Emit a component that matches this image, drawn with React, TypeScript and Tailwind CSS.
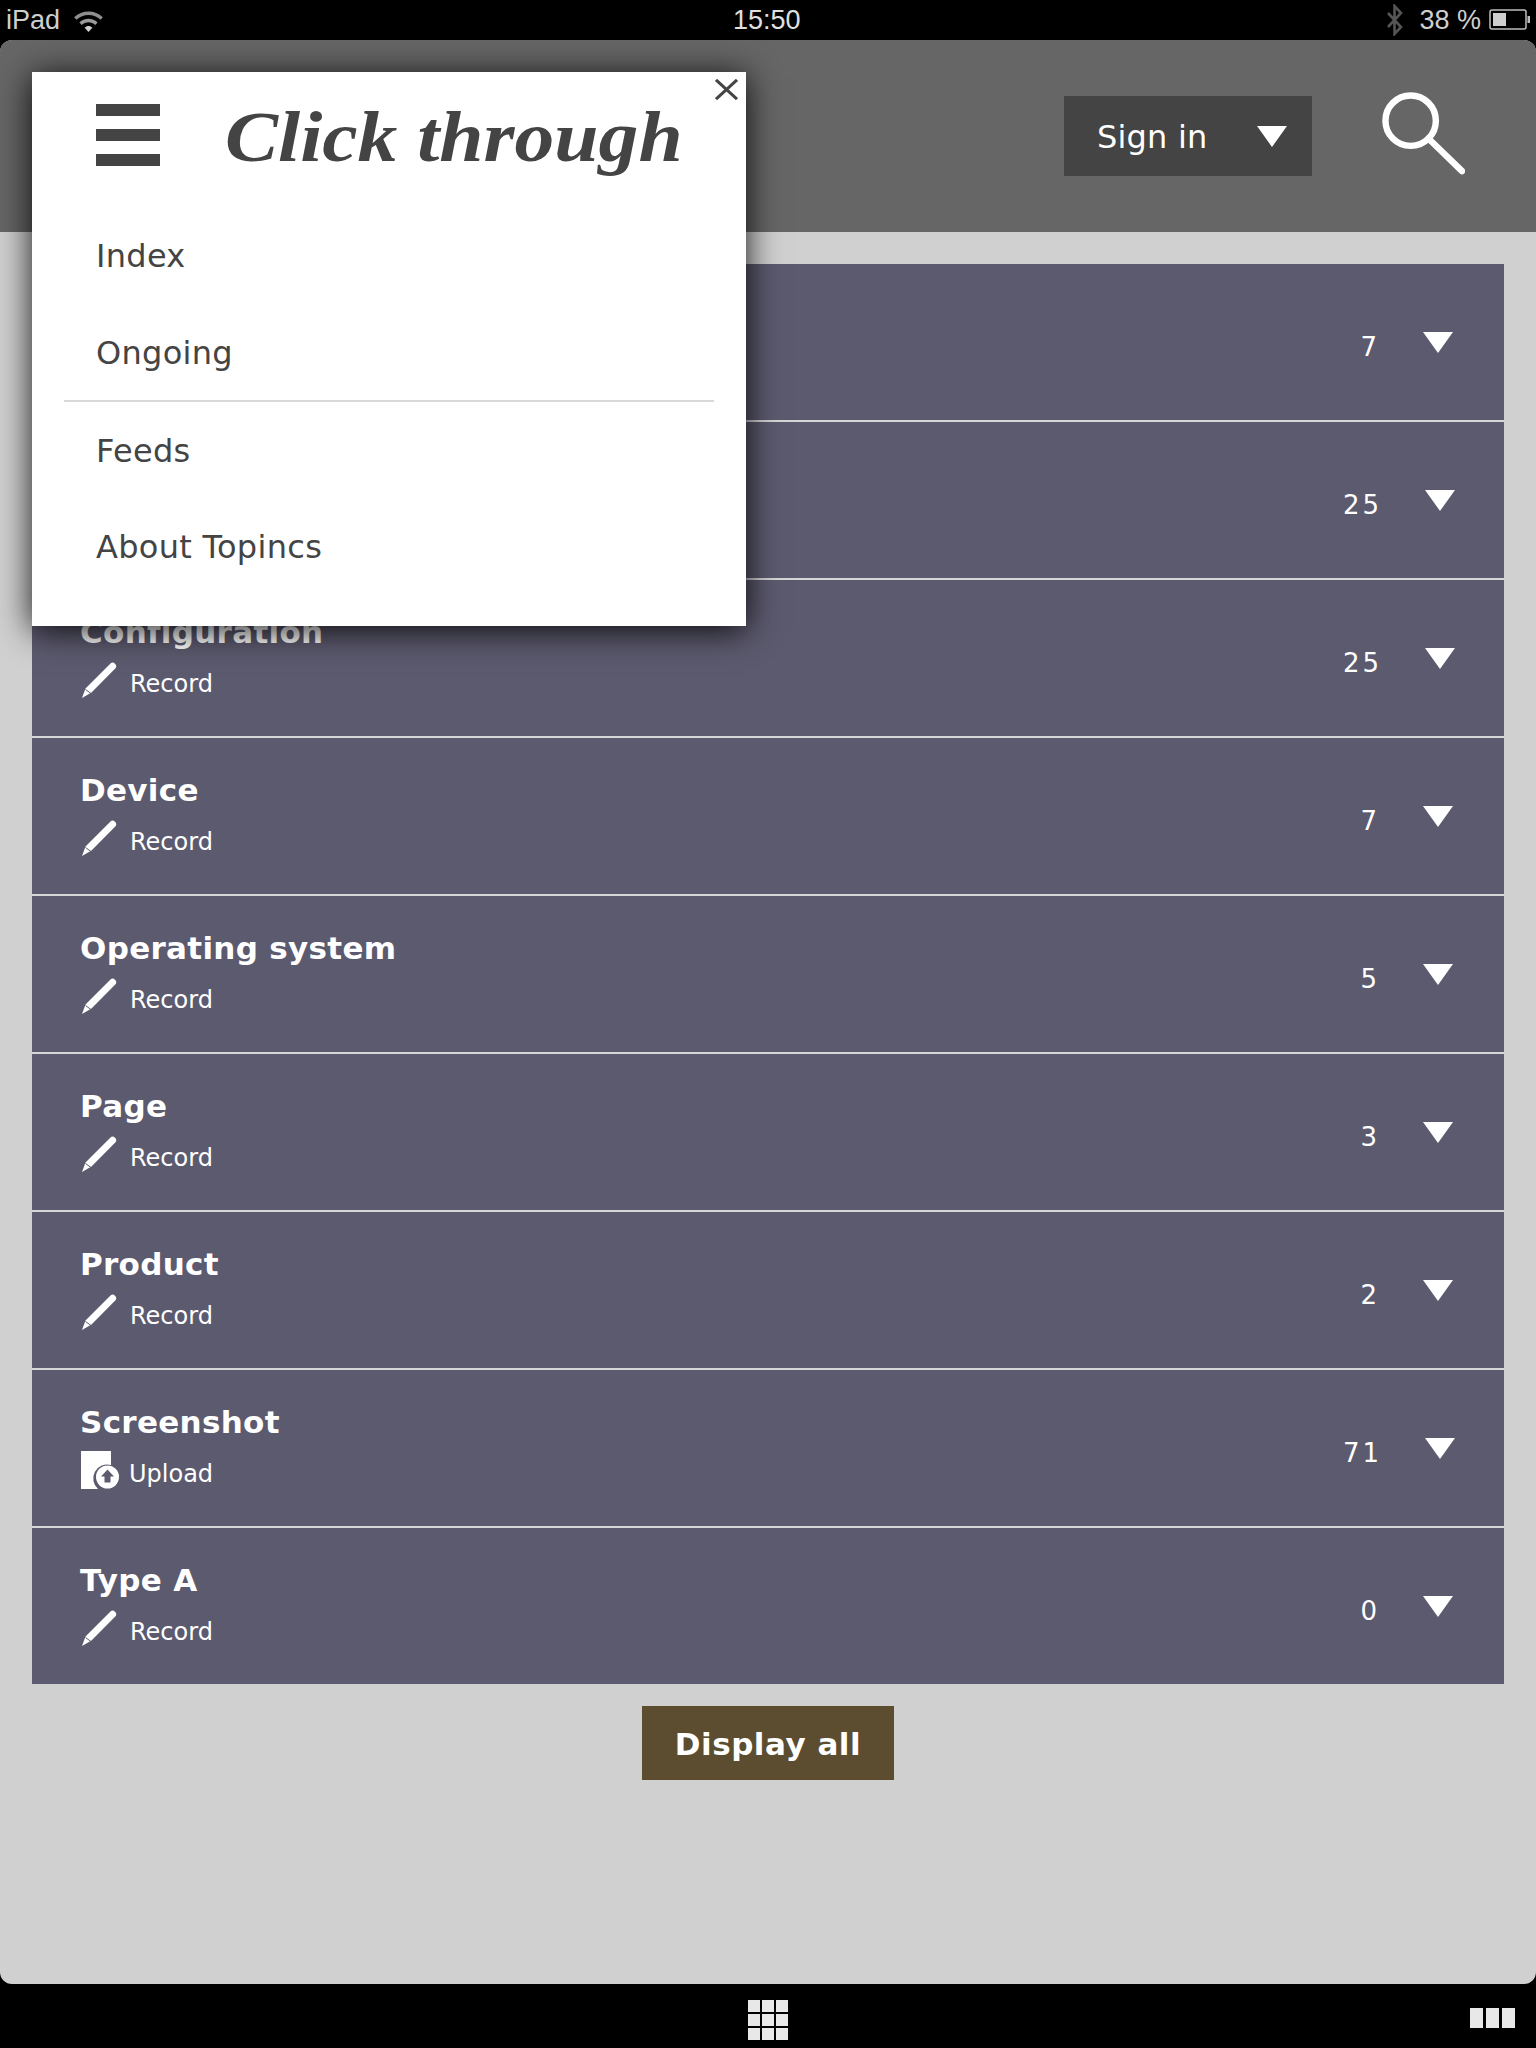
const rows = [
  { title: "", sub: "", count: "7" },
  { title: "", sub: "", count: "25" },
  { title: "Configuration", sub: "Record", count: "25" },
  { title: "Device", sub: "Record", count: "7" },
  { title: "Operating system", sub: "Record", count: "5" },
  { title: "Page", sub: "Record", count: "3" },
  { title: "Product", sub: "Record", count: "2" },
  { title: "Screenshot", sub: "Upload", count: "71" },
  { title: "Type A", sub: "Record", count: "0" },
];

function Caret({ className }: { className: string }) {
  return (
    <svg viewBox="0 0 30 21" className={className}>
      <polygon points="0,0 30,0 15,21" fill="#fff" />
    </svg>
  );
}

function Pencil() {
  return (
    <svg viewBox="0 0 36 36" className="w-[36px] h-[36px] shrink-0 ml-[2px]">
      <path d="M28.500 1.500c1.200-1.200 3-1.200 4.500.2s1.700 3.300.5 4.500L9.500 30.500 0 36l3.500-9.500z" fill="#fff" />
      <path d="M3.500 27.500l5.500 4" stroke="#5c5a6e" strokeWidth="1" fill="none" />
    </svg>
  );
}

function UploadIcon() {
  return (
    <svg viewBox="0 0 39 38" className="w-[39px] h-[38px] shrink-0 ml-[1px]">
      <path d="M0 0h30v14a14 14 0 0 0-13 24H0z" fill="#fff" />
      <circle cx="26.500" cy="26" r="11.500" fill="#fff" />
      <path d="M26.500 18.500l6.500 7h-3.500v6h-6v-6H20z" fill="#5c5a6e" />
    </svg>
  );
}

function Row({ r }: { r: (typeof rows)[number] }) {
  const two = r.count.length > 1;
  return (
    <div className="h-[158px] last:h-[156px] border-b-2 last:border-b-0 border-[#d6d6d6] bg-[#5c5a6e] flex items-start justify-between text-white">
      <div className="pl-[48px] pt-[36px] flex flex-col">
        <div className="h-[32px] leading-[32px] text-[31px] tracking-[0.3px] font-bold whitespace-nowrap">{r.title || "\u00a0"}</div>
        <div className="flex items-center h-[36px] mt-[14px] text-[24px] leading-[36px]">
          {r.sub === "Upload" ? <UploadIcon /> : r.sub ? <Pencil /> : null}
          <span className={r.sub === "Upload" ? "ml-[9px] mt-[7px]" : "ml-[12px] mt-[8px]"}>{r.sub}</span>
        </div>
      </div>
      <div className={`flex items-start pt-[68px] ${two ? "pr-[49px]" : "pr-[51px]"}`}>
        <span className="text-[26px] leading-[30px] tracking-[3px] mr-[43px]">{r.count}</span>
        <Caret className="w-[30px] h-[21px]" />
      </div>
    </div>
  );
}

export default function App() {
  return (
    <div className="w-[1536px] h-[2048px] bg-black font-['DejaVu_Sans',sans-serif] flex flex-col overflow-hidden">
      <div className="h-[40px] shrink-0 flex items-center justify-between relative text-[#cfcfcf] font-['Liberation_Sans',sans-serif] text-[27px] pl-[6px] pr-[5px]">
        <div className="flex items-center gap-[13px]">
          <span>iPad</span>
          <svg viewBox="0 0 32 24" className="w-[31px] h-[23px]">
            <path d="M1 8.500C9 0.500 23 0.500 31 8.500l-2.500 2.600C22 4.500 10 4.500 3.500 11.100z" fill="#8f8f8f" />
            <path d="M6.500 14c5-5 14-5 19 0L23 16.700c-4-4-10-4-14 0z" fill="#9a9a9a" />
            <path d="M12 19.500c2.500-2.300 5.500-2.300 8 0L16 24z" fill="#cfcfcf" />
          </svg>
        </div>
        <span className="absolute left-[733px] top-[4px] leading-[32px] text-[#e0e0e0]">15:50</span>
        <div className="flex items-center">
          <svg viewBox="0 0 18 32" className="w-[18px] h-[32px] mr-[15px]">
            <path d="M2 9l13 14-6.500 7V2L15 9 2 23" fill="none" stroke="#555" strokeWidth="2.600" />
          </svg>
          <span className="mr-[8px]">38 %</span>
          <svg viewBox="0 0 42 22" className="w-[42px] h-[22px]">
            <rect x="1" y="1" width="36" height="19" rx="2" fill="none" stroke="#bdbdbd" strokeWidth="1.500" />
            <rect x="4" y="4" width="13" height="13" fill="#cfcfcf" />
            <path d="M38.500 7h2.500v7h-2.500z" fill="#bdbdbd" />
          </svg>
        </div>
      </div>

      <div className="flex-1 rounded-[12px] overflow-hidden bg-[#d0d0d0] flex flex-col relative">
        <header className="h-[192px] shrink-0 bg-[#666666] flex items-start justify-end">
          <div className="mt-[56px] w-[248px] h-[80px] bg-[#444444] text-white flex items-center justify-between pl-[33px] pr-[25px] text-[32px] tracking-[0.2px]">
            <span className="mt-[2px]">Sign in</span>
            <Caret className="w-[30px] h-[21px]" />
          </div>
          <svg viewBox="0 0 84 88" className="w-[83px] h-[87px] mt-[52px] ml-[70px] mr-[71px]">
            <circle cx="29" cy="29" r="25.500" fill="none" stroke="#fff" strokeWidth="6.500" />
            <path d="M47 47l34 33" stroke="#fff" strokeWidth="6.500" strokeLinecap="round" />
          </svg>
        </header>

        <main className="pt-[32px] px-[32px] flex flex-col items-center">
          <div className="w-full">
            {rows.map((r, i) => (
              <Row key={i} r={r} />
            ))}
          </div>
          <button className="mt-[22px] w-[252px] h-[74px] pt-[2px] bg-[#5c4d30] text-white font-bold text-[31px] tracking-[0.5px]">Display all</button>
        </main>

        <nav className="absolute left-[32px] top-[32px] w-[714px] h-[554px] bg-white text-[#444444] shadow-[0_4px_32px_rgba(0,0,0,0.9)]">
          <svg viewBox="0 0 24 24" className="absolute right-[8px] top-[7px] w-[23px] h-[21px]" preserveAspectRatio="none">
            <path d="M1 1l22 22M23 1L1 23" stroke="#444" strokeWidth="3.400" />
          </svg>
          <div className="flex items-start pl-[64px] pt-[32px]">
            <div className="flex flex-col gap-[13px] w-[64px]">
              <div className="h-[12px] bg-[#444444]" />
              <div className="h-[12px] bg-[#444444]" />
              <div className="h-[12px] bg-[#444444]" />
            </div>
            <div className="ml-[65px] mt-[-7px] font-['Liberation_Serif',serif] italic font-bold text-[72px] leading-[80px] whitespace-nowrap origin-left scale-x-[1.105]">Click through</div>
          </div>
          <ul className="mt-[31px] px-[32px] text-[32px] leading-[97px] tracking-[0.3px]">
            <li className="px-[32px] h-[97px]">Index</li>
            <li className="px-[32px] h-[95px]">Ongoing</li>
            <li className="border-t-2 border-[#d9d9d9] px-[32px] h-[99px] pt-[1px]">Feeds</li>
            <li className="px-[32px] h-[97px]">About Topincs</li>
          </ul>
        </nav>
      </div>

      <footer className="h-[64px] shrink-0 bg-black relative flex items-start justify-center">
        <div className="grid grid-cols-3 gap-[2px] w-[40px] mt-[16px]">
          {Array.from({ length: 9 }).map((_, i) => (
            <div key={i} className="h-[12px] bg-[#e8e8e8]" />
          ))}
        </div>
        <div className="absolute right-[21px] top-[24px] flex gap-[3px]">
          <div className="w-[13px] h-[20px] bg-[#e8e8e8]" />
          <div className="w-[13px] h-[20px] bg-[#e8e8e8]" />
          <div className="w-[13px] h-[20px] bg-[#e8e8e8]" />
        </div>
      </footer>
    </div>
  );
}
